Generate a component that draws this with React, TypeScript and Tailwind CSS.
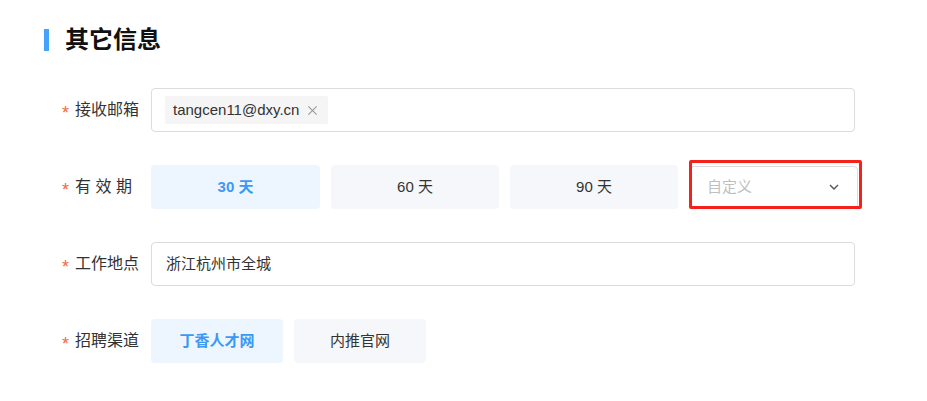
import { useState } from "react";

const periods = [
  { label: "30 天", width: "w-[169px]" },
  { label: "60 天", width: "w-[168px]" },
  { label: "90 天", width: "w-[168px]" },
];
const channels = ["丁香人才网", "内推官网"];

function Label({ text }: { text: string }) {
  return (
    <div className="flex w-[107px] shrink-0 items-center pl-[18px]">
      <span className="mr-[6px] mt-[6px] text-[18px] leading-none text-[#f5683d]">*</span>
      <span className="whitespace-pre text-[16px] text-[#333]">{text}</span>
    </div>
  );
}

function Choice({
  label,
  active,
  width,
  onClick,
}: {
  label: string;
  active: boolean;
  width: string;
  onClick: () => void;
}) {
  return (
    <button
      onClick={onClick}
      className={`${width} h-[44px] rounded-[4px] text-[15px] ${
        active ? "bg-[#edf5ff] font-semibold text-[#3d98f5]" : "bg-[#f5f7fa] text-[#333]"
      }`}
    >
      {label}
    </button>
  );
}

export default function App() {
  const [period, setPeriod] = useState(0);
  const [channel, setChannel] = useState(0);

  return (
    <div
      className="min-h-[401px] bg-white pl-[44px] pt-[29px]"
      style={{ fontFamily: '"Liberation Sans", "Noto Sans CJK SC", sans-serif' }}
    >
      <div className="flex h-[22px] items-center">
        <div className="h-[22px] w-[5px] bg-[#45a3fc]" />
        <h2 className="ml-[16px] text-[24px] font-bold leading-[22px] text-[#111]">其它信息</h2>
      </div>

      <div className="mt-[37px] flex flex-col gap-[33px]">
        <div className="flex items-center">
          <Label text="接收邮箱" />
          <div className="flex h-[44px] w-[704px] items-center rounded-[4px] border border-[#dcdcdc] px-[13px]">
            <span className="flex h-[28px] items-center gap-[8px] rounded-[2px] bg-[#f5f5f5] pl-[8px] pr-[10px] text-[15px] text-[#333]">
              tangcen11@dxy.cn
              <svg width="11" height="11" viewBox="0 0 12 12" className="text-[#999]">
                <path d="M1.5 1.5l9 9M10.5 1.5l-9 9" stroke="currentColor" strokeWidth="1.2" />
              </svg>
            </span>
          </div>
        </div>

        <div className="flex items-center">
          <Label text="有 效 期" />
          <div className="flex items-center gap-[11px]">
            {periods.map((p, i) => (
              <Choice key={p.label} label={p.label} active={period === i} width={p.width} onClick={() => setPeriod(i)} />
            ))}
            <div className="relative ml-[1px]">
              <div className="flex h-[43px] w-[168px] items-center justify-between rounded-[4px] border border-[#dcdcdc] pl-[16px] pr-[18px] text-[15px] text-[#bfbfbf]">
                自定义
                <svg width="10" height="6" viewBox="0 0 10 6" className="text-[#555]">
                  <path d="M1 1l4 4 4-4" fill="none" stroke="currentColor" strokeWidth="1.4" />
                </svg>
              </div>
              <div className="pointer-events-none absolute -left-[1px] -right-[4px] -top-[6px] bottom-0 rounded-[2px] border-[3px] border-[#f5221b]" />
            </div>
          </div>
        </div>

        <div className="flex items-center">
          <Label text="工作地点" />
          <div className="flex h-[44px] w-[704px] items-center rounded-[4px] border border-[#dcdcdc] px-[14px] text-[15px] text-[#333]">
            浙江杭州市全城
          </div>
        </div>

        <div className="flex items-center">
          <Label text="招聘渠道" />
          <div className="flex items-center gap-[11px]">
            {channels.map((c, i) => (
              <Choice key={c} label={c} active={channel === i} width="w-[132px]" onClick={() => setChannel(i)} />
            ))}
          </div>
        </div>
      </div>
    </div>
  );
}
